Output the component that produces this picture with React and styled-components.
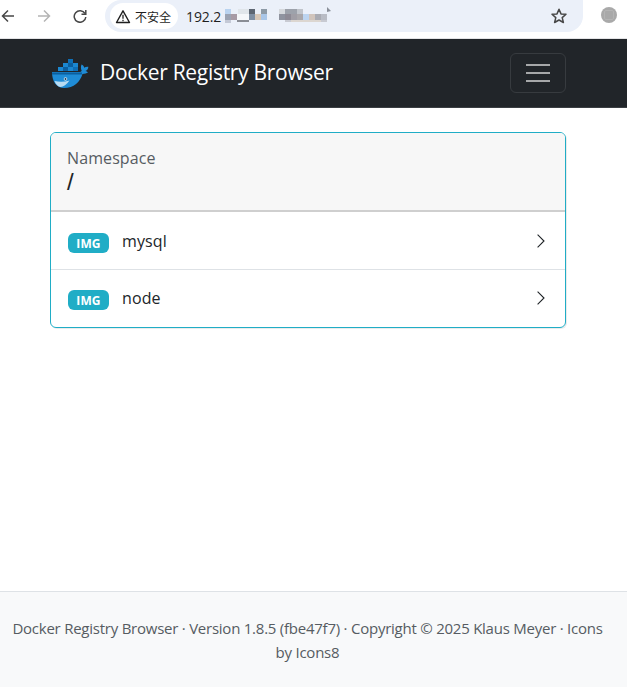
import React from "react";
import styled, { createGlobalStyle } from "styled-components";

const GlobalStyle = createGlobalStyle`
  html, body {
    margin: 0;
    padding: 0;
    background: #fff;
  }
  body {
    font-family: "Open Sans", "Noto Sans", "Noto Sans CJK SC", sans-serif;
    color: #212529;
  }
`;

const Page = styled.div`
  width: 627px;
  height: 687px;
  display: flex;
  flex-direction: column;
  overflow: hidden;
`;

const BrowserBar = styled.div`
  height: 38px;
  flex: none;
  display: flex;
  align-items: flex-start;
  background: #fff;
  border-bottom: 1px solid #e4e4e6;
`;

const NavButtons = styled.div`
  width: 105px;
  height: 32px;
  flex: none;
  display: flex;
  align-items: center;
  padding-left: 1px;
  gap: 22px;
  box-sizing: border-box;
  svg { display: block; flex: none; }
`;

const Omnibox = styled.div`
  width: 478px;
  height: 32px;
  flex: none;
  box-sizing: border-box;
  padding: 3px 15px 3px 5px;
  display: flex;
  align-items: center;
  background: #ebf0f9;
  border-radius: 0 0 16px 16px / 0 0 16px 16px;
  border-top-left-radius: 16px;
  border-top-right-radius: 0;
`;

const SecurityChip = styled.div`
  height: 26px;
  flex: none;
  display: flex;
  align-items: center;
  gap: 4px;
  padding: 0 7px 0 5px;
  background: #fff;
  border-radius: 13px;
  font-size: 12px;
  color: #1f1f1f;
  font-family: "Noto Sans CJK SC", sans-serif;
`;

const Url = styled.span`
  margin-left: 8px;
  font-size: 14px;
  letter-spacing: -0.1px;
  color: #1f1f1f;
`;

const UrlMask = styled.svg`
  margin-left: 4px;
  flex: none;
`;

const Star = styled.div`
  margin-left: auto;
  display: flex;
`;

const Avatar = styled.div`
  width: 16px;
  height: 16px;
  margin: 7px 0 0 18px;
  flex: none;
  display: flex;
  align-items: center;
  justify-content: center;
  border-radius: 50%;
  background: #a9a9a9;
  &::after {
    content: "";
    width: 8px;
    height: 8px;
    border: 1px solid #b4b4b4;
    border-radius: 2px;
  }
`;

const Navbar = styled.header`
  height: 69px;
  flex: none;
  box-sizing: border-box;
  padding: 14px 61px 14px 50px;
  display: flex;
  align-items: center;
  justify-content: space-between;
  background: #212529;
  border-bottom: 1px solid #3b3f43;
`;

const Brand = styled.div`
  display: flex;
  align-items: center;
  gap: 9px;
  color: #fff;
  font-size: 21px;
  letter-spacing: -0.3px;
  span {
    margin-bottom: 2px;
  }
  svg {
    display: block;
  }
`;

const Toggler = styled.button`
  width: 56px;
  height: 40px;
  padding: 0;
  display: flex;
  flex-direction: column;
  align-items: center;
  justify-content: center;
  gap: 6px;
  background: transparent;
  border: 1px solid #373b3f;
  border-radius: 6px;
  span {
    display: block;
    width: 24px;
    height: 2px;
    background: #a6a8a9;
  }
`;

const Main = styled.main`
  flex: 1;
  padding: 24px 61px 0 50px;
`;

const Card = styled.section`
  border: 1px solid #20adc6;
  border-radius: 6px;
  overflow: hidden;
  box-shadow: 1px 1px 0 rgba(0, 0, 0, 0.08);
`;

const CardHeader = styled.div`
  height: 79px;
  box-sizing: border-box;
  padding: 15px 16px 0;
  background: #f7f7f7;
  border-bottom: 2px solid #cfcfcf;
`;

const HeaderLabel = styled.div`
  font-size: 16px;
  line-height: 20px;
  letter-spacing: 0.1px;
  color: #565c62;
`;

const HeaderValue = styled.div`
  font-family: "Liberation Sans", sans-serif;
  font-size: 24px;
  line-height: 28px;
  color: #212529;
`;

const Row = styled.div`
  height: ${(p) => (p.$first ? "57px" : "58px")};
  box-sizing: border-box;
  padding: ${(p) => (p.$first ? "0" : "0 0 2px")};
  padding-left: 17px;
  padding-right: 16px;
  display: flex;
  align-items: center;
  border-top: ${(p) => (p.$first ? "none" : "1px solid #dee2e6")};
`;

const Badge = styled.span`
  width: 41px;
  height: 20px;
  margin-top: 5px;
  flex: none;
  display: flex;
  align-items: center;
  justify-content: center;
  background: #20adc6;
  border-radius: 6px;
  color: #fff;
  font-size: 12px;
  font-weight: 700;
  letter-spacing: 0.1px;
`;

const RowName = styled.span`
  margin-left: 13px;
  font-size: 16px;
  letter-spacing: 0.1px;
  color: #212529;
`;

const Chevron = styled.svg`
  margin-left: auto;
  display: block;
`;

const Footer = styled.footer`
  height: 96px;
  flex: none;
  box-sizing: border-box;
  padding: 24px 18px 0 6px;
  background: #f8f9fa;
  border-top: 1px solid #dee2e6;
  text-align: center;
  font-size: 15px;
  line-height: 24px;
  letter-spacing: -0.24px;
  color: #565c62;
`;

// mosaic over the hidden part of the address, tones read off the screenshot
const mosaic = [
  [0, 2, 6, 5, "#b9d3f0"], [13, 2, 11, 5, "#e0e5ea"], [24, 2, 6, 5, "#5d6672"], [36, 2, 6, 5, "#8d9aa6"],
  [54, 2, 6, 5, "#d5d8dc"], [60, 2, 12, 5, "#9da2ab"], [72, 2, 6, 5, "#c0c4cb"],
  [0, 7, 6, 6, "#9ba3b3"], [6, 7, 6, 6, "#a79aa5"], [12, 7, 12, 6, "#f5f7fa"], [24, 7, 6, 6, "#7f8fa3"],
  [30, 7, 6, 6, "#d8c8b8"], [36, 7, 6, 6, "#a9c6e8"], [54, 7, 6, 6, "#8f939f"], [60, 7, 6, 6, "#8d8a95"],
  [66, 7, 6, 6, "#a09ea6"], [72, 7, 6, 6, "#a9a7ab"], [78, 7, 6, 6, "#bcd4f0"], [84, 7, 6, 6, "#d0c4bc"],
  [90, 7, 6, 6, "#a9abb3"], [96, 7, 6, 6, "#b9bcc5"],
  [0, 13, 6, 3, "#c4c9d6"], [12, 13, 12, 2, "#8a8d95"], [60, 13, 6, 2, "#c8cad2"], [66, 13, 30, 2, "#dcd6d0"],
  [96, 13, 6, 2, "#c8cad2"],
];

const cubes = [
  [18, 1, "#0e6fb6"],
  [13, 5, "#1b87d0"], [18, 5, "#0b5f9f"], [23, 5, "#1b87d0"],
  [8, 9, "#1b87d0"], [13, 9, "#0b5f9f"], [18, 9, "#1b87d0"], [23, 9, "#0e6fb6"],
];

function Whale() {
  return (
    <svg width="41" height="30" viewBox="0 0 41 30">
      {cubes.map(([x, y, fill], i) => (
        <rect key={i} x={x} y={y} width="5" height="4" fill={fill} />
      ))}
      <path
        d="M2 14h27c1.500 0 2.300-.5 2.700-1.300-1-1.800-1-3.800-.2-6.200 1.500.6 2.500 1.800 2.800 3.200.9-.8 2.200-1.200 4-1 .2 1.900-.9 3.500-2.800 4.400 1 .3 1.800.7 2.500 1.300-1.300.9-3.200 1.400-5.500 1.500C30 24 24 30 14 30 6 30 2 23 2 14z"
        fill="#1f8cd6"
      />
      <path d="M2 15.500h30" stroke="#0b5f9f" strokeWidth="2" />
      <path d="M4.500 23c5 1.200 10 1 15-.5-3 4-6 6.500-9 6.500-2.500 0-4.500-2.500-6-6z" fill="#b9dcf2" />
      <circle cx="15.500" cy="21" r="1.800" fill="#cfe3f1" />
      <circle cx="15.500" cy="21" r="0.900" fill="#16395a" />
    </svg>
  );
}

function RowArrow() {
  return (
    <Chevron width="16" height="16" viewBox="0 0 16 16" fill="none">
      <path d="M4.600 1.600 11 8l-6.400 6.400" stroke="#212529" strokeWidth="1.100" />
    </Chevron>
  );
}

function Repo({ name, first }) {
  return (
    <Row $first={first}>
      <Badge>IMG</Badge>
      <RowName>{name}</RowName>
      <RowArrow />
    </Row>
  );
}

export default function App() {
  return (
    <Page>
      <GlobalStyle />
      <BrowserBar>
        <NavButtons>
          <svg width="14" height="14" viewBox="0 0 14 14" fill="none" stroke="#474747" strokeWidth="1.500">
            <path d="M13 7H2M7 1.500 1.500 7 7 12.500" />
          </svg>
          <svg width="14" height="14" viewBox="0 0 14 14" fill="none" stroke="#b4b4b4" strokeWidth="1.500">
            <path d="M1 7h11M7 1.500 12.500 7 7 12.500" />
          </svg>
          <svg width="14" height="14" viewBox="0 0 14 14" fill="none" stroke="#474747" strokeWidth="1.500">
            <path d="M12 4.500A5.800 5.800 0 1 0 12.800 8" />
            <path d="M12.800 1v4.300H8.500" />
          </svg>
        </NavButtons>
        <Omnibox>
          <SecurityChip>
            <svg width="16" height="15" viewBox="0 0 16 15" fill="none">
              <path d="M8 1.800 14.500 13.500h-13z" stroke="#1f1f1f" strokeWidth="1.400" strokeLinejoin="round" />
              <path d="M8 5.800v4M8 10.800v1.400" stroke="#1f1f1f" strokeWidth="1.300" />
            </svg>
            不安全
          </SecurityChip>
          <Url>192.2</Url>
          <UrlMask width="108" height="18" viewBox="0 0 108 18">
            {mosaic.map(([x, y, w, h, fill], i) => (
              <rect key={i} x={x} y={y} width={w} height={h} fill={fill} />
            ))}
            <path d="M102 0l4 4-4 1z" fill="#8a8f99" />
          </UrlMask>
          <Star>
            <svg width="18" height="18" viewBox="0 0 18 18" fill="none">
              <path
                d="m9 2.300 2 4.600 5 .4-3.800 3.300 1.200 4.900L9 13l-4.400 2.500 1.200-4.900L2 7.300l5-.4z"
                stroke="#474747"
                strokeWidth="1.500"
                strokeLinejoin="round"
              />
            </svg>
          </Star>
        </Omnibox>
        <Avatar />
      </BrowserBar>
      <Navbar>
        <Brand>
          <Whale />
          <span>Docker Registry Browser</span>
        </Brand>
        <Toggler aria-label="Toggle navigation">
          <span />
          <span />
          <span />
        </Toggler>
      </Navbar>
      <Main>
        <Card>
          <CardHeader>
            <HeaderLabel>Namespace</HeaderLabel>
            <HeaderValue>/</HeaderValue>
          </CardHeader>
          <Repo name="mysql" first />
          <Repo name="node" />
        </Card>
      </Main>
      <Footer>Docker Registry Browser · Version 1.8.5 (fbe47f7) · Copyright © 2025 Klaus Meyer · Icons by Icons8</Footer>
    </Page>
  );
}
